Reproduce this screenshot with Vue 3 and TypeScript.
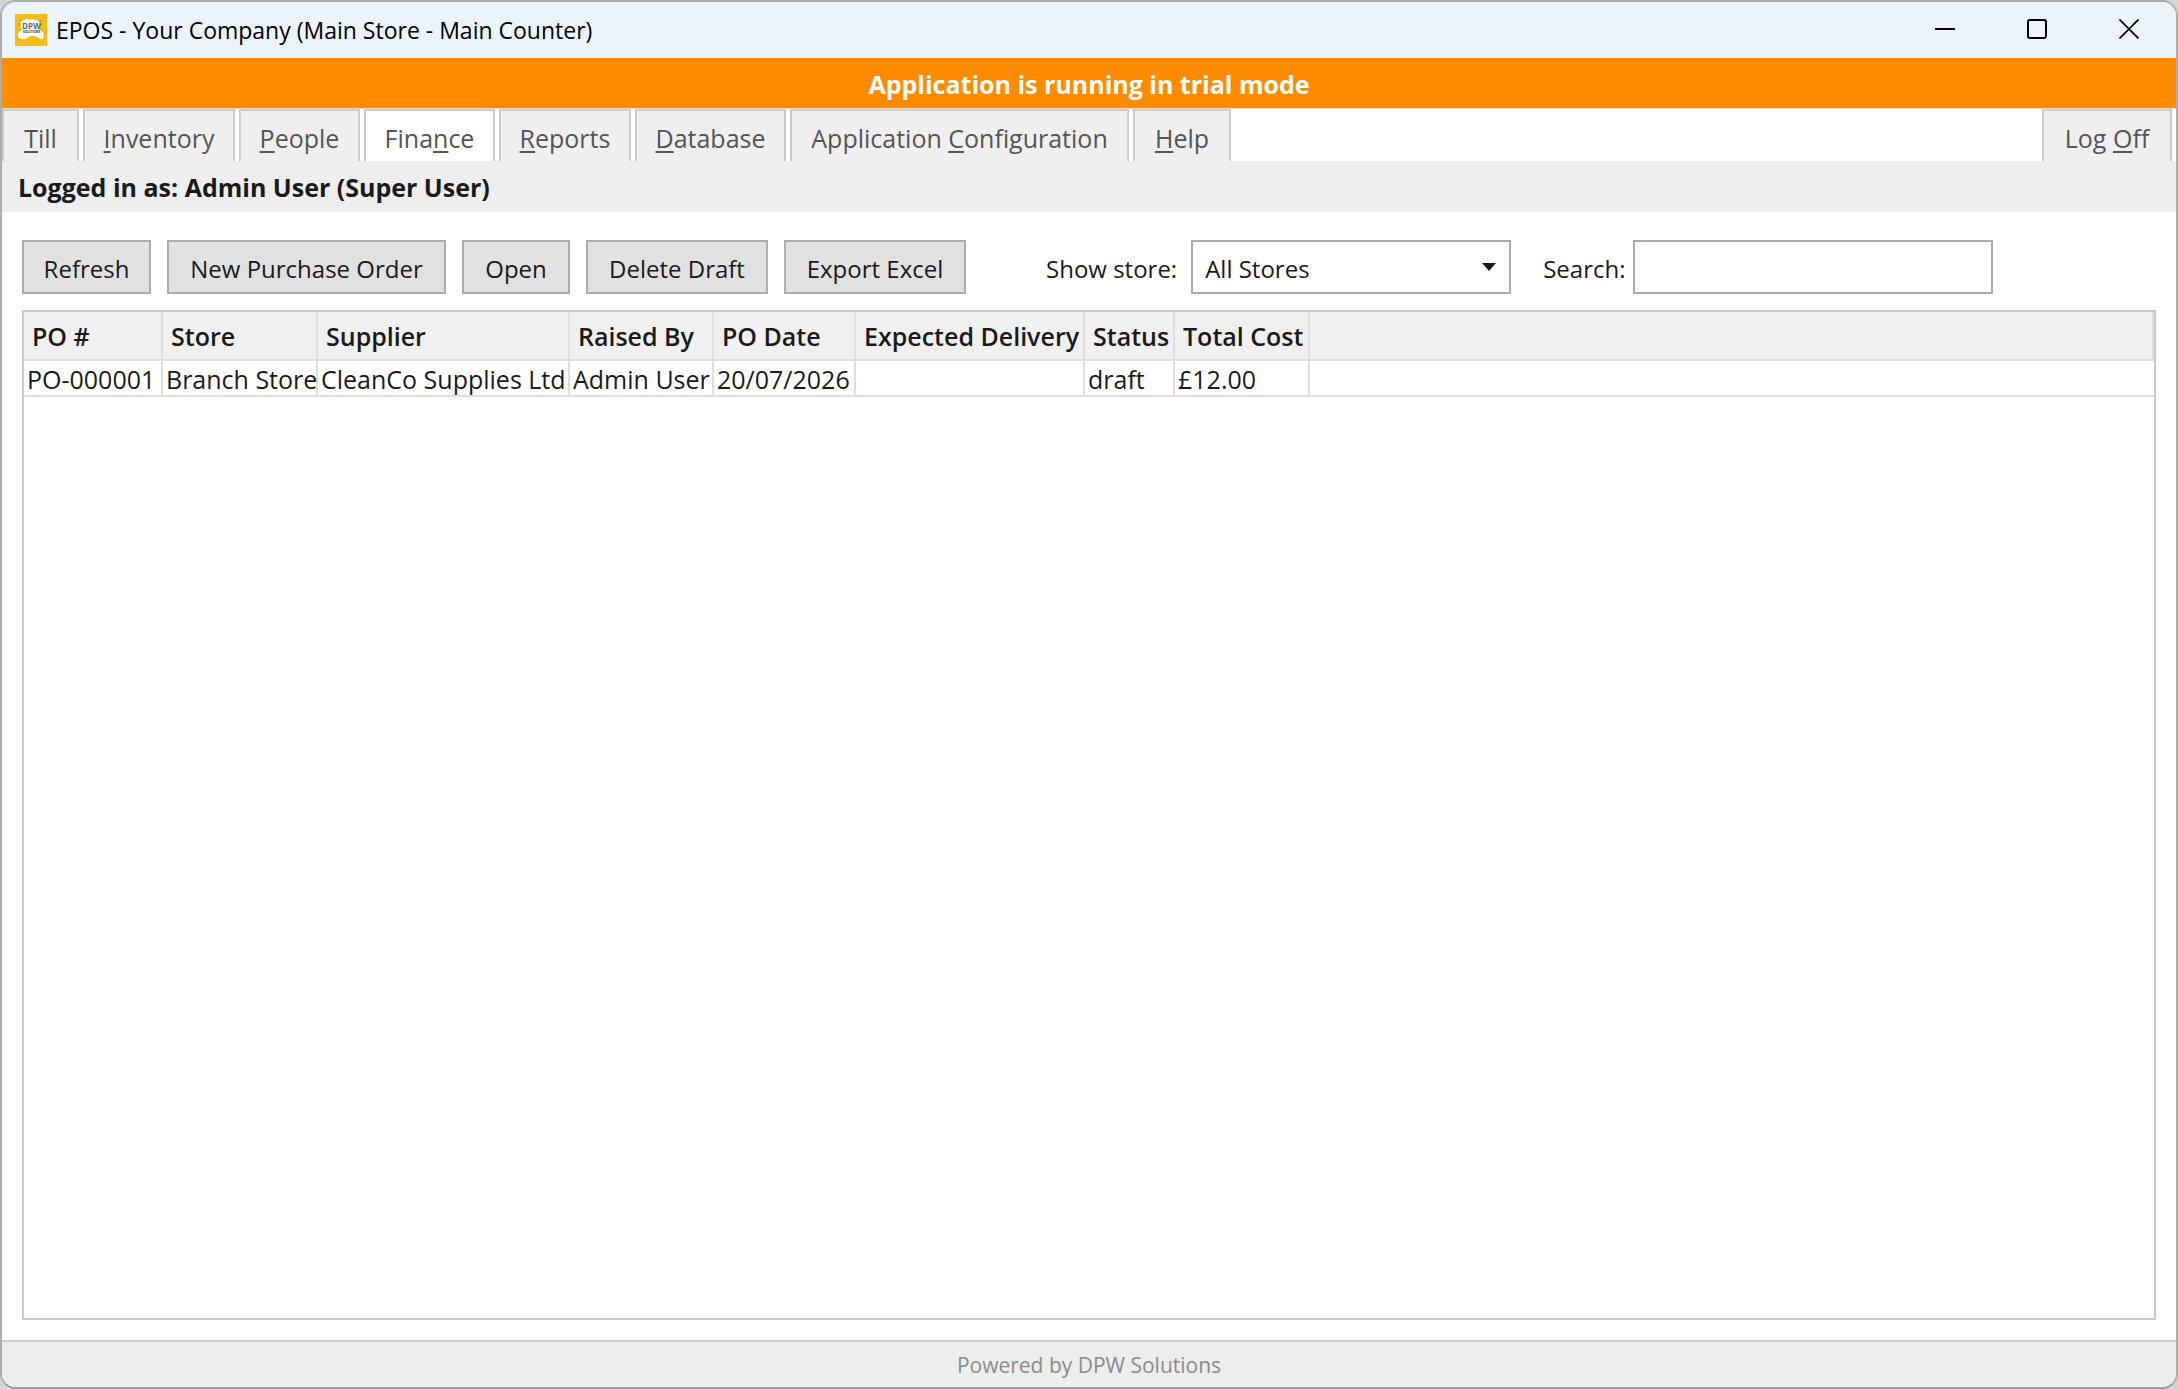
<script setup lang="ts">
import { ref } from 'vue'

interface MenuTab {
  before: string
  key: string
  after: string
  width: number
}

const tabs: MenuTab[] = [
  { before: '', key: 'T', after: 'ill', width: 77 },
  { before: '', key: 'I', after: 'nventory', width: 152 },
  { before: '', key: 'P', after: 'eople', width: 121 },
  { before: 'Fina', key: 'n', after: 'ce', width: 131 },
  { before: '', key: 'R', after: 'eports', width: 132 },
  { before: '', key: 'D', after: 'atabase', width: 151 },
  { before: 'Application ', key: 'C', after: 'onfiguration', width: 339 },
  { before: '', key: 'H', after: 'elp', width: 98 },
]
const activeTab = ref(3)

interface Column {
  title: string
  width: number
}

const actions: Column[] = [
  { title: 'Refresh', width: 129 },
  { title: 'New Purchase Order', width: 279 },
  { title: 'Open', width: 108 },
  { title: 'Delete Draft', width: 182 },
  { title: 'Export Excel', width: 182 },
]

const columns: Column[] = [
  { title: 'PO #', width: 139 },
  { title: 'Store', width: 155 },
  { title: 'Supplier', width: 252 },
  { title: 'Raised By', width: 144 },
  { title: 'PO Date', width: 142 },
  { title: 'Expected Delivery', width: 229 },
  { title: 'Status', width: 90 },
  { title: 'Total Cost', width: 135 },
]

const orders: string[][] = [
  ['PO-000001', 'Branch Store', 'CleanCo Supplies Ltd', 'Admin User', '20/07/2026', '', 'draft', '£12.00'],
]

const store = ref('All Stores')
const search = ref('')
</script>

<template>
  <div class="window">
    <header class="titlebar">
      <svg class="logo" viewBox="0 0 32 32" aria-hidden="true">
        <rect width="32" height="32" fill="#f8bb17" />
        <path
          d="M6 8Q9 4 14 6Q21 4 24 8Q26 12 24 16Q29 17 29 22Q29 26 25 25Q20 21 15 22Q11 26 6 25Q2 24 3 20Q4 17 7 16Q4 12 6 8Z"
          fill="#fff"
        />
        <path d="M4 9l1 3M5 6l1 1M25 6l1 2M26 10l-1 2" stroke="#8a7430" stroke-width="1" />
        <text x="7" y="15" class="logo-main"><tspan fill="#1c7f9c">D</tspan><tspan fill="#d8452f">P</tspan><tspan fill="#1c7f9c">W</tspan></text>
        <text x="8" y="19" class="logo-sub">SOLUTIONS</text>
      </svg>
      <h1 class="title">EPOS - Your Company (Main Store - Main Counter)</h1>
      <div class="controls">
        <button type="button" aria-label="Minimize">
          <svg viewBox="0 0 20 20"><path d="M0 10H20" /></svg>
        </button>
        <button type="button" aria-label="Maximize">
          <svg viewBox="0 0 20 20"><rect x="1" y="1" width="18" height="18" rx="2" /></svg>
        </button>
        <button type="button" aria-label="Close">
          <svg viewBox="0 0 20 20"><path d="M0.5 0.5L19.5 19.5M19.5 0.5L0.5 19.5" stroke-width="1.7" /></svg>
        </button>
      </div>
    </header>

    <div class="trial">Application is running in trial mode</div>

    <nav class="menu">
      <button
        v-for="(tab, i) in tabs"
        :key="i"
        type="button"
        class="tab"
        :class="{ active: i === activeTab }"
        :style="{ width: tab.width + 'px' }"
        @click="activeTab = i"
      >{{ tab.before }}<u>{{ tab.key }}</u>{{ tab.after }}</button>
      <button type="button" class="tab logoff">Log <u>O</u>ff</button>
    </nav>

    <div class="user">Logged in as: Admin User (Super User)</div>

    <main class="content">
      <div class="toolbar">
        <button
          v-for="action in actions"
          :key="action.title"
          type="button"
          class="action"
          :style="{ width: action.width + 'px' }"
        >{{ action.title }}</button>
        <div class="field store">
          <label for="store">Show store:</label>
          <div class="combo">
            <select id="store" v-model="store">
              <option>All Stores</option>
              <option>Main Store</option>
              <option>Branch Store</option>
            </select>
            <svg class="arrow" viewBox="0 0 14 8" aria-hidden="true"><path d="M0 0H14L7 8Z" /></svg>
          </div>
        </div>
        <div class="field search">
          <label for="search">Search:</label>
          <input id="search" v-model="search" type="text" />
        </div>
      </div>

      <div class="grid">
        <table>
          <colgroup>
            <col v-for="col in columns" :key="col.title" :style="{ width: col.width + 'px' }" />
            <col />
          </colgroup>
          <thead>
            <tr>
              <th v-for="col in columns" :key="col.title" scope="col">{{ col.title }}</th>
              <td></td>
            </tr>
          </thead>
          <tbody>
            <tr v-for="order in orders" :key="order[0]">
              <td v-for="(cell, i) in order" :key="i">{{ cell }}</td>
              <td></td>
            </tr>
          </tbody>
        </table>
      </div>
    </main>

    <footer class="footer">Powered by DPW Solutions</footer>
  </div>
</template>

<style>
body {
  background: #d4d4d4;
}
</style>

<style scoped>
.window {
  box-sizing: border-box;
  min-height: 100vh;
  display: flex;
  flex-direction: column;
  border: 2px solid #adadad;
  border-bottom-color: #9c9c9c;
  border-radius: 16px;
  overflow: hidden;
  background: #fff;
  color: #1a1a1a;
  font: 25px/34px 'Open Sans', 'Noto Sans', sans-serif;
}

button,
input,
select {
  font: inherit;
  color: inherit;
  margin: 0;
  box-sizing: border-box;
}

.titlebar {
  display: flex;
  align-items: center;
  height: 56px;
  padding: 0 1px 0 13px;
  background: #ebf4fa;
  color: #000;
}

.logo {
  width: 32px;
  height: 32px;
}

.logo-main {
  font: 700 8px 'Open Sans', sans-serif;
}

.logo-sub {
  font: 700 3px 'Open Sans', sans-serif;
  fill: #333;
}

.title {
  margin: 0 0 0 9px;
  font-size: 23px;
  font-weight: 400;
}

.controls {
  display: flex;
  align-self: stretch;
  margin-left: auto;
}

.controls button {
  display: flex;
  align-items: center;
  justify-content: center;
  width: 92px;
  padding: 0 0 2px;
  border: 0;
  background: none;
}

.controls svg {
  width: 20px;
  height: 20px;
  fill: none;
  stroke: #000;
  stroke-width: 2;
}

.trial {
  height: 50px;
  line-height: 52px;
  border-bottom: 1px solid #f7d9ae;
  background: #ff8c00;
  color: #fff;
  font-weight: 700;
  text-align: center;
}

.menu {
  display: flex;
  gap: 4px;
  height: 52px;
}

.tab {
  flex: none;
  padding: 4px 0 0;
  border: 2px solid #ccc;
  border-bottom: 0;
  background: #efefef;
  color: #555;
  white-space: nowrap;
}

.tab.active {
  background: #fff;
}

.tab u {
  text-decoration-thickness: 2px;
  text-underline-offset: 3px;
}

.logoff {
  width: 130px;
  margin: 0 4px 0 auto;
}

.user {
  height: 50px;
  line-height: 52px;
  padding-left: 16px;
  border-bottom: 1px solid #f4f4f4;
  background: #eee;
  font-weight: 700;
}

.content {
  flex: 1;
  display: flex;
  flex-direction: column;
  gap: 16px;
  padding: 28px 20px 20px;
}

.toolbar {
  display: flex;
  gap: 16px;
  height: 54px;
  font-size: 24px;
}

.action {
  flex: none;
  padding: 4px 0 0;
  border: 2px solid #adadad;
  background: #e1e1e1;
  white-space: nowrap;
}

.field {
  display: flex;
  align-items: center;
  white-space: nowrap;
}

.field label {
  padding-top: 4px;
}

.store {
  gap: 14px;
  margin-left: 64px;
}

.search {
  gap: 8px;
  margin-left: 16px;
}

.combo {
  position: relative;
  width: 320px;
  height: 54px;
}

select,
input {
  height: 54px;
  border: 2px solid #abadb3;
  border-radius: 0;
  background: #fff;
}

select {
  width: 100%;
  padding: 4px 12px 0;
  appearance: none;
}

input {
  width: 360px;
  padding: 0 8px;
}

.arrow {
  position: absolute;
  right: 15px;
  top: 23px;
  width: 14px;
  height: 8px;
  fill: #1a1a1a;
  pointer-events: none;
}

.grid {
  flex: 1;
  border: 2px solid #ccc;
}

table {
  width: 100%;
  table-layout: fixed;
  border-collapse: separate;
  border-spacing: 0;
}

th,
td {
  box-sizing: border-box;
  border: solid #dedede;
  border-width: 0 2px 2px 0;
  text-align: left;
  white-space: nowrap;
}

thead th,
thead td {
  height: 49px;
  padding: 0 0 0 8px;
  background: #f0f0f0;
  font-weight: 600;
}

tbody td {
  height: 36px;
  padding: 2px 0 0 3px;
  line-height: 32px;
}

tbody td:last-child {
  border-right: 0;
}

.footer {
  height: 45px;
  line-height: 46px;
  border-top: 2px solid #ccc;
  background: #ededed;
  color: #8c8c8c;
  font-size: 21px;
  text-align: center;
}
</style>
